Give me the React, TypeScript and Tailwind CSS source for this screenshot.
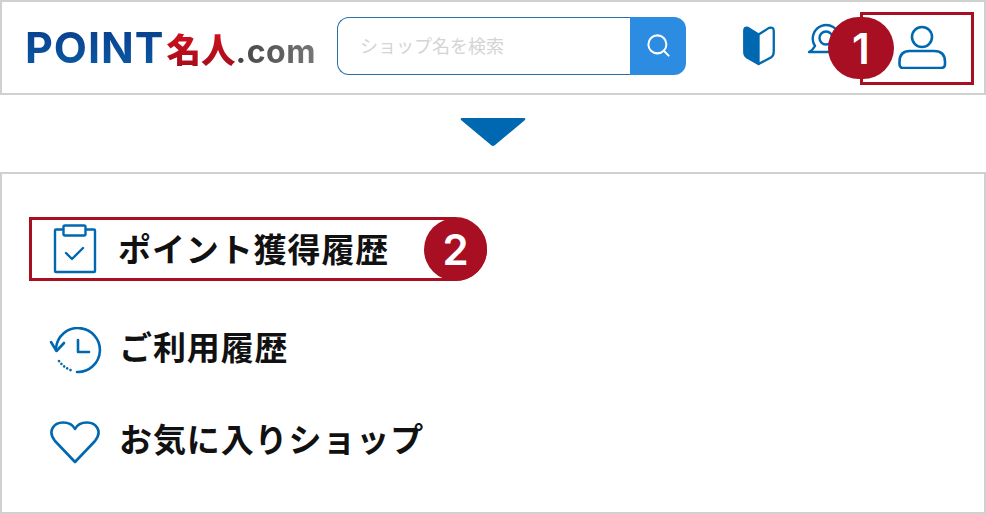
import React from "react";
import { Search } from "lucide-react";

const jp = "font-['Noto_Sans_CJK_JP','Noto_Sans',sans-serif]";

function Badge({ n, className }: { n: string; className: string }) {
  return (
    <div
      className={`absolute flex items-center justify-center rounded-full bg-[#a90f23] text-white font-semibold font-['Inter',sans-serif] ${className}`}
    >
      {n}
    </div>
  );
}

function BeginnerIcon() {
  return (
    <svg width="34" height="40" viewBox="0 0 35 42" fill="none">
      <path d="M17 9 L6 2 Q2 0.5 2 5 V27 Q2 31 5 33 L17 40 Z" fill="#0068b0" stroke="#0068b0" strokeWidth="2.4" strokeLinejoin="round" />
      <path d="M17 9 L28 2 Q33 0.5 33 5 V27 Q33 31 30 33 L17 40" stroke="#0068b0" strokeWidth="2.4" strokeLinejoin="round" />
    </svg>
  );
}

function ChatIcon() {
  return (
    <svg width="40" height="32" viewBox="0 0 40 32" fill="none" stroke="#0068b0" strokeWidth="2.4">
      <path d="M8 23 A13.5 13.5 0 1 1 18 29 H2 Q6 27 8 23 Z" strokeLinejoin="round" />
      <circle cx="19" cy="15" r="6.5" />
    </svg>
  );
}

function UserIcon() {
  return (
    <svg width="49" height="44" viewBox="0 0 49 44" fill="none" stroke="#0068b0" strokeWidth="2.6">
      <circle cx="24" cy="12" r="10" />
      <path d="M12 26 H36 Q47 26 47 37 V39 Q47 43 43 43 H5 Q1.5 43 1.5 39 V37 Q1.5 26 12 26 Z" />
    </svg>
  );
}

function ClipboardIcon() {
  return (
    <svg width="44" height="50" viewBox="0 0 44 50" fill="none" stroke="#0068b0" strokeWidth="2.4" className="mt-[2px]">
      <path d="M10 5.5 H3 Q2 5.5 2 6.5 V47 Q2 48 3 48 H41 Q42 48 42 47 V6.5 Q42 5.5 41 5.5 H33" strokeLinejoin="round" />
      <rect x="10.5" y="1.5" width="22" height="10" rx="1.5" />
      <path d="M13 29 L19 35 L30 24" strokeLinecap="round" strokeLinejoin="round" />
    </svg>
  );
}

function HistoryIcon() {
  return (
    <svg width="54" height="48" viewBox="0 0 54 48" fill="none" stroke="#0068b0" strokeWidth="2.6" className="mt-[10px]">
      <path d="M8 21 A22 22 0 1 1 29 45" strokeLinecap="round" />
      <path d="M3 15 L8.5 24 L16 16" strokeLinecap="round" strokeLinejoin="round" />
      <path d="M30 13 V25 H41" strokeLinecap="round" strokeLinejoin="round" />
      <path d="M11 34 Q16 41 25 44" strokeLinecap="round" strokeDasharray="0.1 3.6" />
    </svg>
  );
}

function HeartIcon() {
  return (
    <svg width="54" height="46" viewBox="0 0 54 46" fill="none" stroke="#0068b0" strokeWidth="2.6" className="mt-[7px]">
      <path d="M27 43 L7 22 C-1 12 6 3.5 15 3.5 C21 3.5 25 6 27 10 C29 6 33 3.5 39 3.5 C48 3.5 55 12 47 22 Z" strokeLinejoin="round" />
    </svg>
  );
}

function MenuRow({ icon, label, className }: { icon: React.ReactNode; label: string; className: string }) {
  return (
    <div className={`flex items-center ${className}`}>
      {icon}
      <span className={`text-[33px] leading-none font-bold tracking-[0.9px] text-[#111] ${jp}`}>{label}</span>
    </div>
  );
}

export default function App() {
  return (
    <div className="relative w-[986px] h-[514px] bg-white overflow-hidden">
      <header className="h-[95px] border-2 border-[#d0d0d0] flex items-center">
        <div className="ml-[23px] w-[294px] flex items-baseline whitespace-nowrap">
          <span className="font-['Inter',sans-serif] font-bold text-[43px] leading-none tracking-[1px] bg-gradient-to-b from-[#0a3f8c] to-[#0a5aa5] bg-clip-text text-transparent">
            POINT
          </span>
          <span className={`ml-[2px] text-[34.5px] leading-none font-black bg-gradient-to-b from-[#d0101c] to-[#a80d1c] bg-clip-text text-transparent ${jp}`}>
            名人
          </span>
          <span className="font-['Inter',sans-serif] font-bold text-[32px] leading-none tracking-[0.5px] bg-gradient-to-r from-[#444] to-[#777] bg-clip-text text-transparent">
            .com
          </span>
        </div>
        <div className="ml-[18px] -mt-[4px] w-[349px] h-[58px] flex">
          <div className={`flex-1 flex items-center pl-[22px] text-[18px] text-[#d4d4d4] rounded-l-[12px] border-[1.5px] border-r-0 border-[#2a6ea6] ${jp}`}>
            ショップ名を検索
          </div>
          <div className="w-[56px] rounded-r-[12px] bg-[#2b8ce2] flex items-center justify-center">
            <Search size={27} color="#fff" strokeWidth={1.8} />
          </div>
        </div>
        <div className="ml-[56px] -mt-[3px]">
          <BeginnerIcon />
        </div>
        <div className="ml-[31px] -mt-[17px]">
          <ChatIcon />
        </div>
        <div className="ml-[51px] -mt-[1px]">
          <UserIcon />
        </div>
      </header>

      <div className="flex justify-center pt-[22px] h-[77px]">
        <svg width="68" height="30" viewBox="0 0 68 30">
          <path d="M3 1 H65 Q67 1 66 3 L36 28 Q34 30 32 28 L2 3 Q1 1 3 1 Z" fill="#0068b0" />
        </svg>
      </div>

      <main className="h-[342px] border-2 border-[#d0d0d0] flex flex-col">
        <MenuRow className="pl-[51px] mt-[48px] gap-[21px]" icon={<ClipboardIcon />} label="ポイント獲得履歴" />
        <MenuRow className="pl-[46px] mt-[43px] gap-[17px]" icon={<HistoryIcon />} label="ご利用履歴" />
        <MenuRow className="pl-[46px] mt-[37px] gap-[17px]" icon={<HeartIcon />} label="お気に入りショップ" />
      </main>

      <div className="absolute left-[860px] top-[12px] w-[114px] h-[73px] border-[3px] border-[#a90f23]" />
      <Badge n="1" className="left-[828px] top-[17px] w-[66px] h-[62px] text-[42px]" />
      <div className="absolute left-[29px] top-[217px] w-[458px] h-[64px] border-[3px] border-[#a90f23] rounded-r-[32px]" />
      <Badge n="2" className="left-[424px] top-[218px] w-[63px] h-[63px] text-[42px]" />
    </div>
  );
}
